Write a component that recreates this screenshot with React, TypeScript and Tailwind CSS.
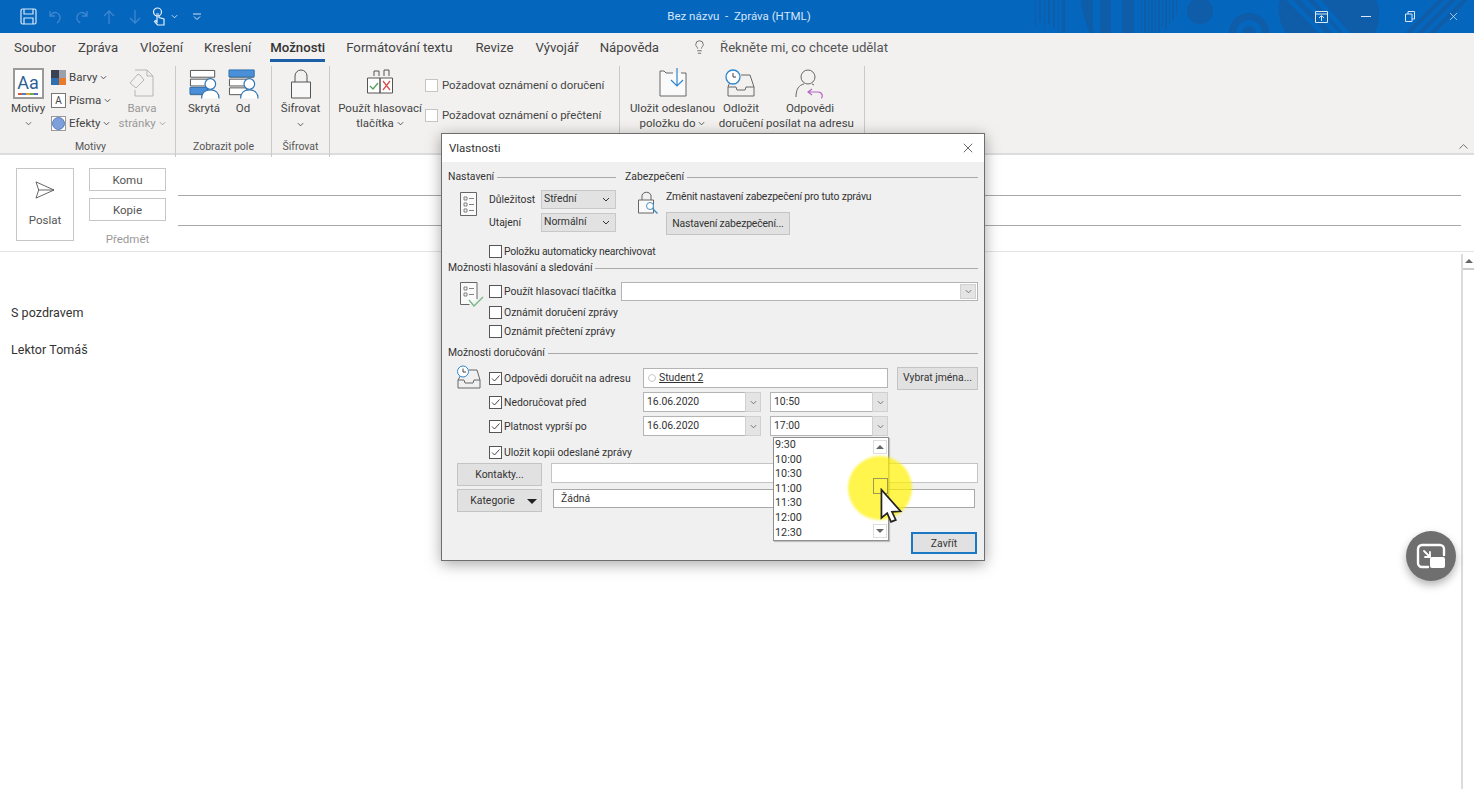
import { ChevronUp, Lightbulb, X } from "lucide-react";

const tabs = [
  { name: "Soubor", gap: "mr-[22px]" },
  { name: "Zpráva", gap: "mr-[22px]" },
  { name: "Vložení", gap: "mr-[21px]" },
  { name: "Kreslení", gap: "mr-[19px]" },
  { name: "Možnosti", gap: "mr-[21px]" },
  { name: "Formátování textu", gap: "mr-[23px]" },
  { name: "Revize", gap: "mr-[22px]" },
  { name: "Vývojář", gap: "mr-[21px]" },
  { name: "Nápověda", gap: "mr-[21px]" },
];
const times = ["9:30", "10:00", "10:30", "11:00", "11:30", "12:00", "12:30"];

function Chev({ className = "" }: { className?: string }) {
  return (
    <svg viewBox="0 0 8 5" className={`inline-block w-[7px] h-[5px] ${className}`} fill="none" stroke="currentColor" strokeWidth="1">
      <path d="M1 1l3 3 3-3" />
    </svg>
  );
}

function TitleBar() {
  return (
    <div className="relative h-[33px] shrink-0 bg-[#0566be] flex items-center overflow-hidden">
      {/* background pattern */}
      <svg className="absolute left-[1010px] top-0 w-[464px] h-[33px]" viewBox="0 0 464 33" fill="#0f5ca8">
        <path d="M25 0h1v27h-1zM29 0h2v22h-2zM34 0h1v30h-1zM38 0h2v24h-2zM43 0h2v28h-2zM48 0h1v33h-1zM52 0h3v33h-3z" />
        <path d="M71 0h12v33h-3C76 24 72 12 71 0z" />
        <path d="M90 0h11v33H90zM112 0h12v33h-12z" />
        <path d="M131 0h1v33h-1zM134 0h2v33h-2zM138 0h1v33h-1zM141 0h2v33h-2zM145 0h1v33h-1zM148 0h2v33h-2zM152 0h1v28h-1zM155 0h2v30h-2zM159 0h1v26h-1zM162 0h2v20h-2zM166 0h1v14h-1z" />
        <circle cx="190" cy="11" r="13" />
        <path fillRule="evenodd" d="M219 33a20 20 0 0 1 40 0h-7a13 13 0 0 0-26 0zM232 33a7 7 0 0 1 14 0z" />
        <path d="M270 0h96c5 11 4 24-2 33h-88c-7-10-9-23-6-33z" />
        <path d="M283 0l33 33h-7L276 0zM297 0l33 33h-7L290 0zM311 0l29 33h-7L304 0z" fill="#0566be" />
        <path d="M395 33L428 0h6l-33 33zM407 33L440 0h6l-33 33zM419 33L452 0h6l-33 33z" />
      </svg>
      <div className="relative flex items-center text-[#cfe2f5]">
        <svg className="ml-[20px] w-[17px] h-[17px]" viewBox="0 0 17 17" fill="none" stroke="#d8e8f8" strokeWidth="1.2">
          <path d="M1 2.500a1.500 1.500 0 0 1 1.500-1.500h12a1.500 1.500 0 0 1 1.500 1.500v12a1.500 1.500 0 0 1-1.500 1.500h-12a1.500 1.500 0 0 1-1.500-1.500z" />
          <path d="M4 1v5h9V1M4 16v-6h9v6" />
        </svg>
        <svg className="ml-[10px] w-[16px] h-[16px]" viewBox="0 0 16 16" fill="none" stroke="#3f86cf" strokeWidth="1.300">
          <path d="M3 2v5h5M3 7c2-3 5-4 7-3 3 1 4 5 2 8l-2 2" />
        </svg>
        <svg className="ml-[11px] w-[16px] h-[16px]" viewBox="0 0 16 16" fill="none" stroke="#3f86cf" strokeWidth="1.300">
          <path d="M13 2v5H8M13 7c-2-3-5-4-7-3-3 1-4 5-2 8l2 2" />
        </svg>
        <svg className="ml-[12px] w-[14px] h-[16px]" viewBox="0 0 14 16" fill="none" stroke="#3f86cf" strokeWidth="1.300">
          <path d="M7 15V2M2 7l5-5 5 5" />
        </svg>
        <svg className="ml-[12px] w-[14px] h-[16px]" viewBox="0 0 14 16" fill="none" stroke="#3f86cf" strokeWidth="1.300">
          <path d="M7 1v13M2 9l5 5 5-5" />
        </svg>
        <svg className="ml-[10px] w-[14px] h-[19px]" viewBox="0 0 14 19" fill="none" stroke="#e3eefa" strokeWidth="1.200">
          <circle cx="5.500" cy="5" r="4" />
          <path d="M4 7h3M5 8V15L3.500 13.500 2.500 14.500 5.500 18h6.500v-6L7 10.500V8" />
        </svg>
        <Chev className="ml-[5px] text-[#e3eefa]" />
        <svg className="ml-[15px] w-[8px] h-[7px]" viewBox="0 0 8 7" fill="none" stroke="#cfe2f5" strokeWidth="1">
          <path d="M0 1h8M1 3.500l3 3 3-3" />
        </svg>
      </div>
      <div className="absolute left-0 right-0 top-0 h-full flex items-center justify-center text-[11.500px] text-[#d4e5f6] pl-[2px]">
        <span className="ml-[2px]">Bez názvu&nbsp; -&nbsp; Zpráva (HTML)</span>
      </div>
      <div className="relative ml-auto flex items-center text-[#dbe9f7]">
        <svg className="w-[13px] h-[12px]" viewBox="0 0 13 12" fill="none" stroke="currentColor" strokeWidth="1">
          <path d="M.5.500h12v11H.5zM.5 3h12" />
          <path d="M6.500 10V5M4 7l2.500-2.500L9 7" />
        </svg>
        <div className="ml-[33px] w-[10px] h-px bg-current" />
        <svg className="ml-[34px] w-[10px] h-[11px]" viewBox="0 0 10 11" fill="none" stroke="currentColor" strokeWidth="1">
          <path d="M.5 3h6.500v7.500H.5zM3 3V.500h6.500V8H7" />
        </svg>
        <X className="ml-[32px] mr-[14px] w-[13px] h-[13px]" strokeWidth={1.300} />
      </div>
    </div>
  );
}

function Tabs() {
  return (
    <div className="h-[29px] shrink-0 bg-[#f2f1f0] flex items-start pt-[5px] pl-[14px] text-[13.200px] text-[#444]">
      {tabs.map((t) => (
        <div key={t.name} className={`flex flex-col items-stretch ${t.gap}`}>
          <span className={t.name === "Možnosti" ? "font-medium text-[#333]" : ""}>{t.name}</span>
          {t.name === "Možnosti" && <div className="h-[3px] mt-[1px] bg-[#1b5fa6]" />}
        </div>
      ))}
      <Lightbulb className="ml-[12px] mt-[1px] w-[15px] h-[16px] text-[#555]" strokeWidth={1.300} />
      <span className="ml-[13px] text-[#555]">Řekněte mi, co chcete udělat</span>
    </div>
  );
}

function Group({ label, width, children }: { label?: string; width: number; children: React.ReactNode }) {
  return (
    <div className="relative shrink-0 flex flex-col h-full border-r border-[#c9c9c9] my-[4px]" style={{ width }}>
      <div className="h-[70px] flex mt-[2px]">{children}</div>
      <div className="mt-[1px] text-center text-[10.500px] text-[#555]">{label}</div>
    </div>
  );
}

function ListIcon({ top }: { top: boolean }) {
  return (
    <svg viewBox="0 0 32 30" className="w-[31px] h-[30px]" fill="none">
      <path d="M1.500 1h25v7h-25zM1.500 10h22v7h-22zM1.500 19h18v7h-18z" stroke="#555" fill="#fff" />
      <path d={top ? "M1 0.500h26v7H1z" : "M1 18.500h18v7H1z"} fill="#4a90d9" stroke="#2e74b5" />
      <circle cx="22" cy="15" r="5.500" fill="#fff" stroke="#2e74b5" strokeWidth="1.200" />
      <path d="M13 30c0-6 4-9 9-9s9 3 9 9" fill="#fff" stroke="#2e74b5" strokeWidth="1.200" />
    </svg>
  );
}

function Ribbon() {
  return (
    <div className="relative h-[93px] shrink-0 bg-[#f2f1f0] border-b-[2px] border-[#dcdcdc] flex pl-[6px] text-[11.500px] leading-[15px] text-[#444]">
      <Group label="Motivy" width={170}>
        <div className="w-[42px] ml-[1px] flex flex-col items-center">
          <div className="w-[31px] h-[31px] border-[2px] border-[#9a9a9a] bg-white flex flex-col items-center justify-end pb-[2px]">
            <span className="text-[18px] leading-[18px] text-[#2f5f95]">Aa</span>
            <div className="flex mt-[1px] gap-0">
              <div className="w-[4px] h-[2px] bg-[#d05c3a]" />
              <div className="w-[4px] h-[2px] bg-[#4a7fc0]" />
              <div className="w-[4px] h-[2px] bg-[#e0a030]" />
              <div className="w-[4px] h-[2px] bg-[#6aa84f]" />
              <div className="w-[4px] h-[2px] bg-[#5b6abf]" />
            </div>
          </div>
          <span className="mt-[2px]">Motivy</span>
          <Chev className="mt-[5px] text-[#555]" />
        </div>
        <div className="ml-[2px] mt-[2px] w-[66px] flex flex-col gap-[8px]">
          <div className="flex items-center h-[15px]">
            <div className="w-[15px] h-[15px] grid grid-cols-2 grid-rows-2">
              <div className="bg-[#3b4252]" />
              <div className="bg-[#9aa1ad]" />
              <div className="bg-[#2f6fb0]" />
              <div className="bg-[#e87a2b]" />
            </div>
            <span className="ml-[3px]">Barvy</span>
            <Chev className="ml-[3px]" />
          </div>
          <div className="flex items-center h-[15px]">
            <div className="w-[15px] h-[15px] border border-[#777] bg-white flex items-center justify-center text-[10px]">A</div>
            <span className="ml-[3px]">Písma</span>
            <Chev className="ml-[3px]" />
          </div>
          <div className="flex items-center h-[15px]">
            <div className="w-[15px] h-[15px] border border-[#999] bg-white flex items-center justify-center">
              <div className="w-[13px] h-[13px] rounded-full bg-[#7f9fdb] border border-[#5a7cc0]" />
            </div>
            <span className="ml-[3px]">Efekty</span>
            <Chev className="ml-[3px]" />
          </div>
        </div>
        <div className="ml-[2px] w-[46px] flex flex-col items-center text-[#999]">
          <svg viewBox="0 0 26 28" className="mt-[1px] w-[26px] h-[28px]" fill="none" stroke="#b5b5b5">
            <path d="M6 1h12l6 6v20H6v-6M18 1v6h6" />
            <path d="M9 5L1 14l6 5 8-8-4-5z" />
          </svg>
          <span className="mt-[4px]">Barva</span>
          <span className="whitespace-nowrap">stránky <Chev /></span>
        </div>
      </Group>
      <Group label="Zobrazit pole" width={96}>
        <div className="ml-[11px] w-[34px] flex flex-col items-center">
          <div className="mt-[1px]"><ListIcon top={false} /></div>
          <span className="mt-[2px]">Skrytá</span>
        </div>
        <div className="ml-[5px] w-[34px] flex flex-col items-center">
          <div className="mt-[1px]"><ListIcon top /></div>
          <span className="mt-[2px]">Od</span>
        </div>
      </Group>
      <Group label="Šifrovat" width={58}>
        <div className="w-full flex flex-col items-center">
          <svg viewBox="0 0 22 30" className="mt-[1px] w-[22px] h-[30px]" fill="#f7f7f7" stroke="#555">
            <path d="M5 13V7a6 6 0 0 1 12 0v6" fill="none" />
            <path d="M1.500 13h19v16h-19z" />
          </svg>
          <span className="mt-[2px]">Šifrovat</span>
          <Chev className="mt-[6px]" />
        </div>
      </Group>
      <Group width={290}>
        <div className="w-[92px] shrink-0 flex flex-col items-center pl-[8px]">
          <svg viewBox="0 0 28 28" className="mt-[1px] w-[28px] h-[28px]" fill="none" stroke="#555">
            <path d="M8 7V2h5v5M18 7V1h5v6" />
            <path d="M1.500 9h12.500v15H1.500zM14 9h12.500v15H14z" fill="#fff" />
            <path d="M4 17l3 3 5-6" stroke="#4fa35a" strokeWidth="1.300" />
            <path d="M17 12l7 9M24 12l-7 9" stroke="#d9534f" strokeWidth="1.300" />
          </svg>
          <span className="mt-[4px]">Použít hlasovací</span>
          <span>tlačítka <Chev /></span>
        </div>
        <div className="ml-[3px] mt-[11px] flex flex-col gap-[17px] text-[11.400px]">
          <label className="flex items-center h-[13px]">
            <div className="w-[13px] h-[13px] border border-[#c5c5c5] bg-white" />
            <span className="ml-[4px]">Požadovat oznámení o doručení</span>
          </label>
          <label className="flex items-center h-[13px]">
            <div className="w-[13px] h-[13px] border border-[#c5c5c5] bg-white" />
            <span className="ml-[4px]">Požadovat oznámení o přečtení</span>
          </label>
        </div>
      </Group>
      <Group width={245}>
        <div className="w-[96px] shrink-0 flex flex-col items-center text-center pl-[9px]">
          <svg viewBox="0 0 28 30" className="w-[28px] h-[30px]" fill="none" stroke="#666">
            <path d="M14 5H7L5 3H1v25h26V5h-5" fill="#fafafa" />
            <path d="M18 0v18M12 12l6 6 6-6" stroke="#2e86d0" strokeWidth="1.200" />
          </svg>
          <span className="mt-[3px] whitespace-nowrap">Uložit odeslanou</span>
          <span className="whitespace-nowrap">položku do <Chev /></span>
        </div>
        <div className="w-[50px] shrink-0 flex flex-col items-center">
          <svg viewBox="0 0 32 28" className="mt-[1px] w-[32px] h-[28px]" fill="none">
            <path d="M6 10L3 18v9h26v-9l-4-12H16" stroke="#666" />
            <path d="M3 18h8l1 3h8l1-3h8" stroke="#666" />
            <circle cx="8" cy="8" r="7" fill="#fff" stroke="#2e86d0" strokeWidth="1.300" />
            <path d="M8 4v4h3" stroke="#444" />
          </svg>
          <span className="mt-[4px]">Odložit</span>
          <span className="whitespace-nowrap">doručení</span>
        </div>
        <div className="flex-1 flex flex-col items-center pr-[10px]">
          <svg viewBox="0 0 30 30" className="mt-[1px] w-[30px] h-[30px]" fill="none" stroke="#666">
            <circle cx="13" cy="8" r="7" />
            <path d="M1 28c0-8 3-12 8-13M17 15l2 1" />
            <path d="M17 20l-4 3 4 3M13 23h10c5 0 5 6 3 6" stroke="#b566c2" strokeWidth="1.200" />
          </svg>
          <span className="mt-[2px]">Odpovědi</span>
          <span className="whitespace-nowrap">posílat na adresu</span>
        </div>
      </Group>
      <ChevronUp className="absolute right-[3px] bottom-[-1px] w-[15px] h-[15px] text-[#555]" strokeWidth={1.300} />
    </div>
  );
}

function MessageHeader() {
  return (
    <div className="h-[97px] shrink-0 border-b border-[#e3e3e3] pl-[16px] pt-[13px] flex text-[11.500px] text-[#555]">
      <div className="w-[58px] h-[73px] border border-[#c6c6c6] flex flex-col items-center pt-[12px]">
        <svg viewBox="0 0 24 20" className="w-[22px] h-[18px]" fill="none" stroke="#555" strokeWidth="1">
          <path d="M2 1l20 9-20 9 3-9zM5 10h17" />
        </svg>
        <span className="mt-[13px]">Poslat</span>
      </div>
      <div className="ml-[15px] w-[77px] flex flex-col">
        <div className="h-[23px] border border-[#c6c6c6] flex items-center justify-center pt-[2px]">Komu</div>
        <div className="h-[23px] mt-[7px] border border-[#c6c6c6] flex items-center justify-center pt-[2px]">Kopie</div>
        <div className="mt-[10px] text-center text-[#999]">Předmět</div>
      </div>
      <div className="ml-[12px] flex-1 mr-[13px]">
        <div className="mt-[27px] h-px bg-[#a8a8a8]" />
        <div className="mt-[29px] h-px bg-[#a8a8a8]" />
      </div>
    </div>
  );
}

function Box({ checked = false }: { checked?: boolean }) {
  return (
    <div className="w-[13px] h-[13px] shrink-0 border border-[#555] bg-white flex items-center justify-center">
      {checked && (
        <svg viewBox="0 0 11 11" className="w-[11px] h-[11px]" fill="none" stroke="#444" strokeWidth="1">
          <path d="M2 5.500l2.500 2.500 5-5.500" />
        </svg>
      )}
    </div>
  );
}

function SectionTitle({ children, className = "" }: { children: React.ReactNode; className?: string }) {
  return (
    <div className={`flex items-center h-[14px] ${className}`}>
      <span className="mr-[3px] whitespace-nowrap">{children}</span>
      <div className="flex-1 h-px bg-[#aaa]" />
    </div>
  );
}

function Check({ checked, children }: { checked?: boolean; children: React.ReactNode }) {
  return (
    <div className="flex items-center h-[14px] whitespace-nowrap">
      <Box checked={checked} />
      <span className="ml-[2px] pt-[2px]">{children}</span>
    </div>
  );
}

function DropBtn() {
  return (
    <div className="w-[16px] h-full shrink-0 bg-[#e4e4e4] border border-[#d0d0d0] flex items-center justify-center text-[#666]">
      <Chev />
    </div>
  );
}

function Field({ value, width }: { value: string; width: number }) {
  return (
    <div className="flex h-[20px]" style={{ width }}>
      <div className="flex-1 border border-[#b4b4b4] border-r-0 bg-white pl-[3px] leading-[18px]">{value}</div>
      <DropBtn />
    </div>
  );
}

function Btn({ className = "border border-[#c4c4c4]", children }: { className?: string; children: React.ReactNode }) {
  return <div className={`bg-[#e1e1e1] flex items-center justify-center ${className}`}>{children}</div>;
}

function TimeList() {
  return (
    <div className="absolute left-[331px] top-[303px] w-[116px] h-[104px] bg-white border border-[#8f8f8f] flex shadow-[1px_1px_1px_rgba(0,0,0,0.2)]">
      <div className="flex-1 pl-[1px] text-[10.800px] leading-[14.600px]">
        {times.map((t) => (
          <div key={t}>{t}</div>
        ))}
      </div>
      <div className="w-[14px] mr-px my-[2px] flex flex-col justify-between items-center">
        <div className="w-[14px] h-[14px] border border-[#ddd] flex items-center justify-center">
          <div className="border-x-[4px] border-x-transparent border-b-[4px] border-b-[#666]" />
        </div>
        <div className="w-[14px] h-[14px] border border-[#ddd] flex items-center justify-center">
          <div className="border-x-[4px] border-x-transparent border-t-[4px] border-t-[#666]" />
        </div>
      </div>
    </div>
  );
}

function Dialog() {
  return (
    <div className="absolute left-[441px] top-[133px] w-[544px] h-[428px] border border-[#6e6e6e] bg-[#f0f0f0] shadow-[0_3px_14px_rgba(0,0,0,0.35)] text-[10.400px] leading-[14px] text-[#333]">
      <div className="h-[28px] bg-white flex items-center pl-[7px] pr-[8px] text-[11.500px]">
        <span>Vlastnosti</span>
        <X className="ml-auto w-[16px] h-[16px] text-[#333]" strokeWidth={1.100} />
      </div>
      <div className="pl-[6px] pr-[6px]">
        <div className="flex mt-[8px]">
          <div className="w-[168px] shrink-0">
            <SectionTitle>Nastavení</SectionTitle>
            <div className="flex mt-[6px]">
              <svg viewBox="0 0 17 24" className="ml-[12px] mt-[2px] w-[17px] h-[24px]" fill="#fafafa" stroke="#666">
                <path d="M.5.500h16v23H.5z" />
                <path d="M4 5h3v3H4zM4 11h3v3H4zM4 17h3v3H4zM9 6.500h5M9 12.500h5M9 18.500h5" strokeWidth="0.800" />
              </svg>
              <div className="ml-[12px] flex-1">
                <div className="flex items-center h-[18px]">
                  <span className="w-[52px] pt-[1px]">Důležitost</span>
                  <div className="w-[75px] h-[19px] bg-[#e2e2e2] border border-[#c8c8c8] flex items-center justify-between pl-[2px] pr-[5px]">
                    Střední <Chev className="w-[8px]" />
                  </div>
                </div>
                <div className="flex items-center h-[20px] mt-[4px]">
                  <span className="w-[52px] pt-[1px]">Utajení</span>
                  <div className="w-[75px] h-[19px] bg-[#e2e2e2] border border-[#c8c8c8] flex items-center justify-between pl-[2px] pr-[5px]">
                    Normální <Chev className="w-[8px]" />
                  </div>
                </div>
              </div>
            </div>
          </div>
          <div className="ml-[9px] flex-1">
            <SectionTitle>Zabezpečení</SectionTitle>
            <div className="flex mt-[5px]">
              <svg viewBox="0 0 22 26" className="ml-[12px] mt-[1px] w-[22px] h-[26px]" fill="none" stroke="#666">
                <path d="M5 10V5a5 5 0 0 1 9 0v5" />
                <path d="M1.500 10h15v13h-15z" fill="#fafafa" />
                <circle cx="13" cy="16" r="3.500" stroke="#4a90c4" fill="#fff" />
                <path d="M15.500 18.500l5 5" stroke="#4a90c4" strokeWidth="1.500" />
              </svg>
              <div className="ml-[7px] tracking-[-0.15px]">
                <div className="h-[14px] whitespace-nowrap pt-[1px]">Změnit nastavení zabezpečení pro tuto zprávu</div>
                <Btn className="mt-[9px] w-[124px] h-[23px] border border-[#c4c4c4]">Nastavení zabezpečení...</Btn>
              </div>
            </div>
          </div>
        </div>
        <div className="ml-[41px] mt-[9px] tracking-[-0.2px]">
          <Check>Položku automaticky nearchivovat</Check>
        </div>

        <SectionTitle className="mt-[3px]">Možnosti hlasování a sledování</SectionTitle>
        <div className="flex mt-[6px]">
          <svg viewBox="0 0 24 26" className="ml-[12px] mt-px w-[24px] h-[26px]" fill="none" stroke="#666">
            <path d="M17 17V.500H.500v22h9" fill="#fafafa" />
            <path d="M4 5h3v3H4zM4 11h3v3H4zM9 6.500h5M9 12.500h5" strokeWidth="0.800" />
            <path d="M9 18l5 6 9-9" stroke="#6fb583" strokeWidth="1.200" />
          </svg>
          <div className="ml-[5px] flex-1">
            <div className="flex items-center h-[20px]">
              <div className="w-[132px]">
                <Check>Použít hlasovací tlačítka</Check>
              </div>
              <div className="flex-1 h-[19px] flex bg-white border border-[#b4b4b4] justify-end p-px">
                <DropBtn />
              </div>
            </div>
            <div className="mt-[4px]"><Check>Oznámit doručení zprávy</Check></div>
            <div className="mt-[5px]"><Check>Oznámit přečtení zprávy</Check></div>
          </div>
        </div>

        <SectionTitle className="mt-[8px]">Možnosti doručování</SectionTitle>
        <div className="flex mt-[7px]">
          <svg viewBox="0 0 26 24" className="w-[26px] h-[24px] mt-[-2px] ml-[8px]" fill="none">
            <path d="M6 8L2 15v8h22v-8l-3-10h-8" stroke="#666" />
            <path d="M2 15h6l1 3h8l1-3h6" stroke="#666" />
            <circle cx="7" cy="6.500" r="5.500" fill="#fff" stroke="#2e86d0" />
            <path d="M7 3.500V7h3" stroke="#444" />
          </svg>
          <div className="ml-[7px] flex-1">
            <div className="flex items-center h-[22px]">
              <div className="w-[154px]"><Check checked>Odpovědi doručit na adresu</Check></div>
              <div className="w-[245px] h-[20px] bg-white border border-[#b4b4b4] flex items-center pl-[4px]">
                <div className="w-[8px] h-[8px] rounded-full border border-[#c8c8c8]" />
                <span className="ml-[3px] underline">Student 2</span>
              </div>
              <Btn className="ml-[9px] w-[81px] h-[23px] border border-[#c4c4c4]">Vybrat jména...</Btn>
            </div>
            <div className="flex items-center h-[20px] mt-[3px]">
              <div className="w-[154px]"><Check checked>Nedoručovat před</Check></div>
              <Field value="16.06.2020" width={118} />
              <div className="ml-[9px]"><Field value="10:50" width={118} /></div>
            </div>
            <div className="flex items-center h-[20px] mt-[4px]">
              <div className="w-[154px]"><Check checked>Platnost vyprší po</Check></div>
              <Field value="16.06.2020" width={118} />
              <div className="ml-[9px]"><Field value="17:00" width={118} /></div>
            </div>
            <div className="mt-[9px] h-[13px]"><Check checked>Uložit kopii odeslané zprávy</Check></div>
          </div>
        </div>

        <div className="flex ml-[9px] mt-[5px]">
          <Btn className="w-[85px] h-[23px] border border-[#c4c4c4] pt-[1px]">Kontakty...</Btn>
          <div className="ml-[9px] flex-1 h-[20px] bg-white border border-[#c4c4c4]" />
        </div>
        <div className="flex ml-[9px] mt-[3px]">
          <Btn className="w-[85px] h-[23px] relative border border-[#c4c4c4] pt-[1px]">
            <span className="-ml-[14px]">Kategorie</span>
            <div className="absolute right-[4px] top-[9px] border-x-[5px] border-x-transparent border-t-[5px] border-t-[#222]" />
          </Btn>
          <div className="ml-[11px] mr-[3px] flex-1 h-[19px] bg-white border border-[#a8a8a8] pl-[7px] leading-[17px]">Žádná</div>
        </div>
        <div className="flex justify-end mt-[20px] mr-[1px]">
          <Btn className="w-[66px] h-[22px] border-[2px] border-[#1a78c4] pt-[1px]">Zavřít</Btn>
        </div>
      </div>
      <TimeList />
    </div>
  );
}

export default function App() {
  return (
    <div className="relative w-[1474px] h-[789px] overflow-hidden bg-white flex flex-col font-[family-name:Roboto,sans-serif]">
      <TitleBar />
      <Tabs />
      <Ribbon />
      <MessageHeader />
      <div className="flex-1 flex pt-[2px]">
        <div className="flex-1 pl-[11px] pt-[50px] text-[12.500px] text-[#333] leading-[18px] tracking-[0.05px]">
          <p>S pozdravem</p>
          <p className="mt-[19px]">Lektor Tomáš</p>
        </div>
        <div className="w-[13px] border-l-[2px] border-[#dcdcdc]">
          <div className="h-[16px] border-b-[2px] border-[#ccc] flex items-center justify-center">
            <div className="border-x-[4px] border-x-transparent border-b-[4px] border-b-[#666]" />
          </div>
        </div>
      </div>
      <Dialog />

      {/* recording highlight and pointer */}
      <div className="absolute left-[848px] top-[456px] w-[64px] h-[64px] rounded-full bg-[#fff200]/70 blur-[1px]" />
      <div className="absolute left-[873px] top-[478px] w-[15px] h-[16px] border border-[#9a9a50]" />
      <svg viewBox="0 0 24 38" className="absolute left-[880px] top-[488px] w-[23px] h-[37px]" fill="#fff" stroke="#222" strokeWidth="1.800">
        <path d="M1.500 1.500V31l6-5 4 9 5-2-4-8.500 9-.5z" />
      </svg>

      {/* picture in picture button */}
      <div className="absolute left-[1406px] top-[531px] w-[50px] h-[50px] rounded-full bg-[#6f6f6f] shadow-[0_4px_8px_rgba(0,0,0,0.3)] flex items-center justify-center">
        <svg viewBox="0 0 30 26" className="w-[30px] h-[26px]" fill="none" stroke="#fff" strokeWidth="2.400" strokeLinecap="round">
          <path d="M12 24H6a4 4 0 0 1-4-4V6a4 4 0 0 1 4-4h18a4 4 0 0 1 4 4v6" />
          <path d="M8 8l6 6M14 9v5H9" strokeWidth="1.800" />
          <rect x="14" y="14" width="15" height="11" rx="2" fill="#fff" stroke="none" />
        </svg>
      </div>
    </div>
  );
}
